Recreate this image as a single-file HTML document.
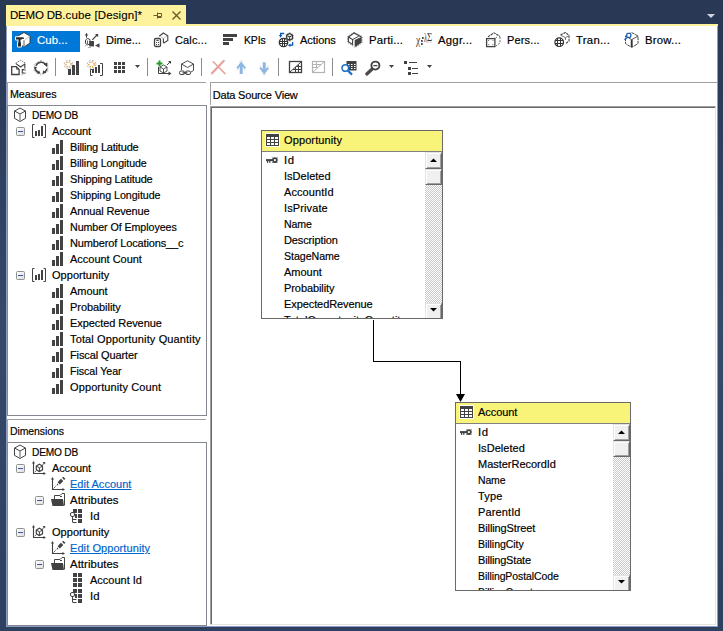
<!DOCTYPE html><html><head><meta charset="utf-8"><title>DEMO DB.cube [Design]</title><style>
html,body{margin:0;padding:0}
body{width:723px;height:631px;overflow:hidden;background:linear-gradient(#293955 0,#293955 26px,#35496a 330px,#2e4060 631px);position:relative;font-family:"Liberation Sans",sans-serif;font-size:11px;color:#000}
.a{position:absolute}
.t{position:absolute;white-space:nowrap;line-height:16px;height:16px;-webkit-text-stroke:0.18px currentColor}
svg{position:absolute;left:0;top:0;overflow:visible}
a{color:#0066cc;text-decoration:underline}
.sb{position:absolute;width:17px;box-sizing:border-box;background-color:#fff;background-image:conic-gradient(#fff 25%,#c8c8c8 0 50%,#fff 0 75%,#c8c8c8 0);background-size:2px 2px}
.btn{position:absolute;left:0;width:17px;height:17px;box-sizing:border-box;background:#f0f0f0;border:1px solid;border-color:#e3e3e3 #696969 #696969 #e3e3e3;box-shadow:inset 1px 1px 0 #fff,inset -1px -1px 0 #a0a0a0}
</style></head><body>
<div class="a" style="left:6px;top:5px;width:180px;height:21px;background:#fff29d;"></div>
<div class="a" style="left:6px;top:24px;width:712px;height:2px;background:#fff29d;"></div>
<div class="t" style="left:10px;top:7px;font-size:11.5px;line-height:17px;height:17px;-webkit-text-stroke:0.1px currentColor;letter-spacing:0.13px"><span style="letter-spacing:-0.2px">DEMO DB</span>.cube [Design]*</div>
<div class="a" style="left:6px;top:26px;width:711px;height:600px;background:#fff;"></div>
<div class="a" style="left:6px;top:26px;width:1px;height:601px;background:#8e9bc0;"></div>
<div class="a" style="left:6px;top:626px;width:712px;height:1px;background:#8e9bc0;"></div>
<div class="a" style="left:717px;top:26px;width:1px;height:601px;background:#8e9bc0;"></div>
<div class="a" style="left:12px;top:31px;width:68px;height:21px;background:#0078d7;"></div>
<div class="t" style="left:37px;top:32px;letter-spacing:0.093px;transform:scaleX(1.0300);transform-origin:0 0;color:#fff;line-height:17px;height:17px">Cub...</div>
<div class="t" style="left:106px;top:32px;letter-spacing:-0.005px;color:#000;line-height:17px;height:17px">Dime...</div>
<div class="t" style="left:175px;top:32px;letter-spacing:0.147px;color:#000;line-height:17px;height:17px">Calc...</div>
<div class="t" style="left:244px;top:32px;letter-spacing:-0.115px;transform:scaleX(0.9441);transform-origin:0 0;color:#000;line-height:17px;height:17px">KPIs</div>
<div class="t" style="left:300px;top:32px;letter-spacing:-0.039px;color:#000;line-height:17px;height:17px">Actions</div>
<div class="t" style="left:369px;top:32px;letter-spacing:0.177px;transform:scaleX(1.0300);transform-origin:0 0;color:#000;line-height:17px;height:17px">Parti...</div>
<div class="t" style="left:438px;top:32px;letter-spacing:0.243px;transform:scaleX(1.0300);transform-origin:0 0;color:#000;line-height:17px;height:17px">Aggr...</div>
<div class="t" style="left:507px;top:32px;letter-spacing:0.145px;color:#000;line-height:17px;height:17px">Pers...</div>
<div class="t" style="left:576px;top:32px;letter-spacing:0.261px;transform:scaleX(1.0300);transform-origin:0 0;color:#000;line-height:17px;height:17px">Tran...</div>
<div class="t" style="left:645px;top:32px;letter-spacing:0.217px;transform:scaleX(1.0300);transform-origin:0 0;color:#000;line-height:17px;height:17px">Brow...</div>
<div class="a" style="left:55px;top:58px;width:1px;height:18px;background:#8d8d8d;"></div>
<div class="a" style="left:147px;top:58px;width:1px;height:18px;background:#8d8d8d;"></div>
<div class="a" style="left:201px;top:58px;width:1px;height:18px;background:#8d8d8d;"></div>
<div class="a" style="left:278px;top:58px;width:1px;height:18px;background:#8d8d8d;"></div>
<div class="a" style="left:332px;top:58px;width:1px;height:18px;background:#8d8d8d;"></div>
<div class="a" style="left:7px;top:82px;width:199px;height:1px;background:#a0a0a0;"></div>
<div class="a" style="left:7px;top:82px;width:1px;height:23px;background:#a0a0a0;"></div>
<div class="a" style="left:210px;top:82px;width:507px;height:1px;background:#a0a0a0;"></div>
<div class="a" style="left:210px;top:82px;width:1px;height:23px;background:#a0a0a0;"></div>
<div class="a" style="left:7px;top:419px;width:199px;height:1px;background:#a0a0a0;"></div>
<div class="a" style="left:7px;top:419px;width:1px;height:23px;background:#a0a0a0;"></div>
<div class="t" style="left:10px;top:86px;letter-spacing:-0.058px;transform:scaleX(0.9721);transform-origin:0 0;">Measures</div>
<div class="t" style="left:10px;top:423px;letter-spacing:-0.096px;transform:scaleX(0.9522);transform-origin:0 0;">Dimensions</div>
<div class="t" style="left:212.7px;top:87px;letter-spacing:-0.184px;">Data Source View</div>
<div class="a" style="left:7px;top:105px;width:200px;height:311px;background:#fff;border:1px solid #828790;box-sizing:border-box"></div>
<div class="a" style="left:7px;top:442px;width:200px;height:184px;background:#fff;border:1px solid #828790;box-sizing:border-box"></div>
<div class="a" style="left:210px;top:106px;width:506px;height:519px;background:#fff;border:1px solid;border-color:#a0a0a0 #e3e3e3 #e3e3e3 #a0a0a0;box-sizing:border-box;box-shadow:inset 1px 1px 0 #696969"></div>
<div class="t" style="left:31.8px;top:107px;letter-spacing:-0.207px;transform:scaleX(0.9220);transform-origin:0 0;">DEMO DB</div>
<div class="t" style="left:52px;top:123px;letter-spacing:-0.106px;">Account</div>
<div class="t" style="left:70px;top:139px;letter-spacing:-0.190px;">Billing Latitude</div>
<div class="t" style="left:70px;top:155px;letter-spacing:-0.063px;transform:scaleX(0.9617);transform-origin:0 0;">Billing Longitude</div>
<div class="t" style="left:70px;top:171px;letter-spacing:-0.142px;">Shipping Latitude</div>
<div class="t" style="left:70px;top:187px;letter-spacing:-0.053px;transform:scaleX(0.9706);transform-origin:0 0;">Shipping Longitude</div>
<div class="t" style="left:70px;top:203px;letter-spacing:-0.131px;">Annual Revenue</div>
<div class="t" style="left:70px;top:219px;letter-spacing:-0.062px;transform:scaleX(0.9693);transform-origin:0 0;">Number Of Employees</div>
<div class="t" style="left:70px;top:235px;letter-spacing:-0.132px;">Numberof Locations__c</div>
<div class="t" style="left:70px;top:251px;letter-spacing:-0.019px;">Account Count</div>
<div class="t" style="left:52px;top:267px;letter-spacing:0.040px;">Opportunity</div>
<div class="t" style="left:70px;top:283px;letter-spacing:-0.051px;">Amount</div>
<div class="t" style="left:70px;top:299px;letter-spacing:-0.060px;">Probability</div>
<div class="t" style="left:70px;top:315px;letter-spacing:-0.072px;">Expected Revenue</div>
<div class="t" style="left:70px;top:331px;letter-spacing:0.136px;">Total Opportunity Quantity</div>
<div class="t" style="left:70px;top:347px;letter-spacing:-0.112px;">Fiscal Quarter</div>
<div class="t" style="left:70px;top:363px;letter-spacing:-0.052px;transform:scaleX(0.9692);transform-origin:0 0;">Fiscal Year</div>
<div class="t" style="left:70px;top:379px;letter-spacing:0.114px;">Opportunity Count</div>
<div class="t" style="left:31.8px;top:444px;letter-spacing:-0.207px;transform:scaleX(0.9220);transform-origin:0 0;">DEMO DB</div>
<div class="t" style="left:52px;top:460px;letter-spacing:-0.106px;">Account</div>
<div class="t" style="left:70px;top:476px;letter-spacing:0.021px;"><a>Edit Account</a></div>
<div class="t" style="left:70px;top:492px;letter-spacing:0.072px;transform:scaleX(1.0300);transform-origin:0 0;">Attributes</div>
<div class="t" style="left:90px;top:508px;letter-spacing:0.171px;transform:scaleX(1.0300);transform-origin:0 0;">Id</div>
<div class="t" style="left:52px;top:524px;letter-spacing:0.040px;">Opportunity</div>
<div class="t" style="left:70px;top:540px;letter-spacing:0.077px;"><a>Edit Opportunity</a></div>
<div class="t" style="left:70px;top:556px;letter-spacing:0.072px;transform:scaleX(1.0300);transform-origin:0 0;">Attributes</div>
<div class="t" style="left:90px;top:572px;letter-spacing:-0.007px;">Account Id</div>
<div class="t" style="left:90px;top:588px;letter-spacing:0.171px;transform:scaleX(1.0300);transform-origin:0 0;">Id</div>
<div class="a" style="left:261px;top:130px;width:182px;height:189px;background:#fff;border:1px solid #696969;box-sizing:border-box;overflow:hidden">
<div class="a" style="left:0;top:0;width:180px;height:20px;background:#f8f47a;border-bottom:1px solid #808080"></div>
<div class="t" style="left:22px;top:1px;letter-spacing:0.113px;">Opportunity</div>
<div class="t" style="left:22px;top:21px;letter-spacing:0.705px;transform:scaleX(1.0300);transform-origin:0 0;">Id</div>
<div class="t" style="left:22px;top:37px;letter-spacing:0.015px;">IsDeleted</div>
<div class="t" style="left:22px;top:53px;letter-spacing:0.087px;">AccountId</div>
<div class="t" style="left:22px;top:69px;letter-spacing:0.112px;">IsPrivate</div>
<div class="t" style="left:22px;top:85px;letter-spacing:-0.093px;transform:scaleX(0.9632);transform-origin:0 0;">Name</div>
<div class="t" style="left:22px;top:101px;letter-spacing:-0.120px;">Description</div>
<div class="t" style="left:22px;top:117px;letter-spacing:-0.068px;transform:scaleX(0.9692);transform-origin:0 0;">StageName</div>
<div class="t" style="left:22px;top:133px;letter-spacing:-0.018px;">Amount</div>
<div class="t" style="left:22px;top:149px;letter-spacing:-0.078px;">Probability</div>
<div class="t" style="left:22px;top:165px;letter-spacing:-0.086px;">ExpectedRevenue</div>
<div class="t" style="left:22px;top:181px;letter-spacing:0.039px;">TotalOpportunityQuantity</div>
<div class="sb" style="left:163px;top:21px;height:167px"><div class="btn" style="top:0"></div><div class="btn" style="top:17px;height:16px"></div><div class="btn" style="bottom:-1px"></div></div>
</div>
<div class="a" style="left:455px;top:402px;width:176px;height:189px;background:#fff;border:1px solid #696969;box-sizing:border-box;overflow:hidden">
<div class="a" style="left:0;top:0;width:174px;height:20px;background:#f8f47a;border-bottom:1px solid #808080"></div>
<div class="t" style="left:22px;top:1px;letter-spacing:-0.064px;">Account</div>
<div class="t" style="left:22px;top:21px;letter-spacing:0.607px;transform:scaleX(1.0300);transform-origin:0 0;">Id</div>
<div class="t" style="left:22px;top:37px;letter-spacing:0.048px;">IsDeleted</div>
<div class="t" style="left:22px;top:53px;letter-spacing:-0.025px;">MasterRecordId</div>
<div class="t" style="left:22px;top:69px;letter-spacing:-0.128px;transform:scaleX(0.9504);transform-origin:0 0;">Name</div>
<div class="t" style="left:22px;top:85px;letter-spacing:0.188px;">Type</div>
<div class="t" style="left:22px;top:101px;letter-spacing:0.127px;">ParentId</div>
<div class="t" style="left:22px;top:117px;letter-spacing:-0.115px;">BillingStreet</div>
<div class="t" style="left:22px;top:133px;letter-spacing:-0.061px;transform:scaleX(0.9598);transform-origin:0 0;">BillingCity</div>
<div class="t" style="left:22px;top:149px;letter-spacing:-0.178px;">BillingState</div>
<div class="t" style="left:22px;top:165px;letter-spacing:-0.085px;transform:scaleX(0.9520);transform-origin:0 0;">BillingPostalCode</div>
<div class="t" style="left:22px;top:181px;letter-spacing:-0.082px;transform:scaleX(0.9518);transform-origin:0 0;">BillingCountry</div>
<div class="sb" style="left:157px;top:21px;height:167px"><div class="btn" style="top:0"></div><div class="btn" style="top:17px;height:16px"></div><div class="btn" style="bottom:-1px"></div></div>
</div>
<svg width="723" height="631" viewBox="0 0 723 631"><defs><linearGradient id="eg" x1="0" y1="0" x2="1" y2="1"><stop offset="0" stop-color="#fff"/><stop offset="1" stop-color="#dcdcdc"/></linearGradient></defs>
<g transform="translate(153,11)"><path d="M0.5 4.5H4M4.5 1.5V7.5M4.5 2.5H8.5V5.5H4.5M4.5 6.5H8.5" fill="none" stroke="#6b5b2e" stroke-width="1"/></g>
<g transform="translate(172,11)"><path d="M0.5 0.5L8.5 8.5M8.5 0.5L0.5 8.5" fill="none" stroke="#6b5b2e" stroke-width="1.4"/></g>
<g transform="translate(707,14)"><path d="M0 0H8L4 4Z" fill="#ced4e2"/></g>
<g transform="translate(13,107.5)"><path d="M7 0.5L12.5 3.6V10.8L7 14L1.5 10.8V3.6Z" fill="#fff" stroke="#424242"/><path d="M1.5 3.5L7 6.5L12.5 3.5" fill="none" stroke="#424242"/><path d="M7 6.5V13" stroke="#8a8a8a" stroke-width="1.4"/></g>
<g transform="translate(16,127)"><rect x="0.5" y="0.5" width="8" height="8" rx="1" fill="url(#eg)" stroke="#919191"/><rect x="2" y="4" width="5" height="1" fill="#3c4fa0"/></g>
<g transform="translate(32,124)"><path d="M2.5 0.5H0.5V13.5H2.5M11.5 0.5H13.5V13.5H11.5" fill="none" stroke="#424242"/><rect x="3" y="7" width="2" height="5" fill="#424242"/><rect x="6" y="6" width="2" height="6" fill="#424242"/><rect x="9" y="2" width="2" height="10" fill="#424242"/></g>
<g transform="translate(16,271)"><rect x="0.5" y="0.5" width="8" height="8" rx="1" fill="url(#eg)" stroke="#919191"/><rect x="2" y="4" width="5" height="1" fill="#3c4fa0"/></g>
<g transform="translate(32,268)"><path d="M2.5 0.5H0.5V13.5H2.5M11.5 0.5H13.5V13.5H11.5" fill="none" stroke="#424242"/><rect x="3" y="7" width="2" height="5" fill="#424242"/><rect x="6" y="6" width="2" height="6" fill="#424242"/><rect x="9" y="2" width="2" height="10" fill="#424242"/></g>
<g transform="translate(52,140)"><rect x="0" y="8" width="3" height="6" fill="#424242"/><rect x="4" y="4" width="3" height="10" fill="#424242"/><rect x="8" y="0" width="3" height="14" fill="#424242"/></g>
<g transform="translate(52,156)"><rect x="0" y="8" width="3" height="6" fill="#424242"/><rect x="4" y="4" width="3" height="10" fill="#424242"/><rect x="8" y="0" width="3" height="14" fill="#424242"/></g>
<g transform="translate(52,172)"><rect x="0" y="8" width="3" height="6" fill="#424242"/><rect x="4" y="4" width="3" height="10" fill="#424242"/><rect x="8" y="0" width="3" height="14" fill="#424242"/></g>
<g transform="translate(52,188)"><rect x="0" y="8" width="3" height="6" fill="#424242"/><rect x="4" y="4" width="3" height="10" fill="#424242"/><rect x="8" y="0" width="3" height="14" fill="#424242"/></g>
<g transform="translate(52,204)"><rect x="0" y="8" width="3" height="6" fill="#424242"/><rect x="4" y="4" width="3" height="10" fill="#424242"/><rect x="8" y="0" width="3" height="14" fill="#424242"/></g>
<g transform="translate(52,220)"><rect x="0" y="8" width="3" height="6" fill="#424242"/><rect x="4" y="4" width="3" height="10" fill="#424242"/><rect x="8" y="0" width="3" height="14" fill="#424242"/></g>
<g transform="translate(52,236)"><rect x="0" y="8" width="3" height="6" fill="#424242"/><rect x="4" y="4" width="3" height="10" fill="#424242"/><rect x="8" y="0" width="3" height="14" fill="#424242"/></g>
<g transform="translate(52,252)"><rect x="0" y="8" width="3" height="6" fill="#424242"/><rect x="4" y="4" width="3" height="10" fill="#424242"/><rect x="8" y="0" width="3" height="14" fill="#424242"/></g>
<g transform="translate(52,284)"><rect x="0" y="8" width="3" height="6" fill="#424242"/><rect x="4" y="4" width="3" height="10" fill="#424242"/><rect x="8" y="0" width="3" height="14" fill="#424242"/></g>
<g transform="translate(52,300)"><rect x="0" y="8" width="3" height="6" fill="#424242"/><rect x="4" y="4" width="3" height="10" fill="#424242"/><rect x="8" y="0" width="3" height="14" fill="#424242"/></g>
<g transform="translate(52,316)"><rect x="0" y="8" width="3" height="6" fill="#424242"/><rect x="4" y="4" width="3" height="10" fill="#424242"/><rect x="8" y="0" width="3" height="14" fill="#424242"/></g>
<g transform="translate(52,332)"><rect x="0" y="8" width="3" height="6" fill="#424242"/><rect x="4" y="4" width="3" height="10" fill="#424242"/><rect x="8" y="0" width="3" height="14" fill="#424242"/></g>
<g transform="translate(52,348)"><rect x="0" y="8" width="3" height="6" fill="#424242"/><rect x="4" y="4" width="3" height="10" fill="#424242"/><rect x="8" y="0" width="3" height="14" fill="#424242"/></g>
<g transform="translate(52,364)"><rect x="0" y="8" width="3" height="6" fill="#424242"/><rect x="4" y="4" width="3" height="10" fill="#424242"/><rect x="8" y="0" width="3" height="14" fill="#424242"/></g>
<g transform="translate(52,380)"><rect x="0" y="8" width="3" height="6" fill="#424242"/><rect x="4" y="4" width="3" height="10" fill="#424242"/><rect x="8" y="0" width="3" height="14" fill="#424242"/></g>
<g transform="translate(13,444.5)"><path d="M7 0.5L12.5 3.6V10.8L7 14L1.5 10.8V3.6Z" fill="#fff" stroke="#424242"/><path d="M1.5 3.5L7 6.5L12.5 3.5" fill="none" stroke="#424242"/><path d="M7 6.5V13" stroke="#8a8a8a" stroke-width="1.4"/></g>
<g transform="translate(16,464)"><rect x="0.5" y="0.5" width="8" height="8" rx="1" fill="url(#eg)" stroke="#919191"/><rect x="2" y="4" width="5" height="1" fill="#3c4fa0"/></g>
<g transform="translate(32,461)"><path d="M1.5 1V12.5H13" fill="none" stroke="#424242" stroke-width="1.1"/><path d="M0 2.6L1.5 0L3 2.6ZM11.4 11L14 12.5L11.4 14Z" fill="#424242"/><path d="M7.4 3.2L10.5 5V8.8L7.4 10.6L4.3 8.8V5Z" fill="#fff" stroke="#424242" stroke-width="1.2"/><path d="M4.5 5.1L7.4 6.8L10.3 5.1M7.4 6.8V10.4" fill="none" stroke="#424242" stroke-width="1"/><path d="M10.2 4.2L12 2.4" stroke="#424242"/><path d="M10.5 1H13.2V3.6Z" fill="#424242"/><path d="M2.8 11.2L3.8 10.2" stroke="#424242" stroke-width="0.9"/></g>
<g transform="translate(51,477)"><path d="M1.5 1V12.5H13" fill="none" stroke="#424242" stroke-width="1.1"/><path d="M0 2.6L1.5 0L3 2.6ZM11.4 11L14 12.5L11.4 14Z" fill="#424242"/><path d="M7.7 6.3L11.1 2.9" stroke="#424242" stroke-width="3.3"/><path d="M12.1 1.9L13.3 0.7" stroke="#424242" stroke-width="3"/><path d="M5.6 8.6L7.6 8L6.2 6.6Z" fill="#424242"/><path d="M2.6 11.4L5 9" stroke="#424242" stroke-dasharray="1.6 1"/></g>
<g transform="translate(35,496)"><rect x="0.5" y="0.5" width="8" height="8" rx="1" fill="url(#eg)" stroke="#919191"/><rect x="2" y="4" width="5" height="1" fill="#3c4fa0"/></g>
<g transform="translate(51,493)"><path d="M3.5 12.5V2.5L9 2.5L11 0.5H13.5V12.5" fill="#fff" stroke="#424242"/><path d="M0 6H12L13 13H1.5Z" fill="#424242"/><rect x="9" y="3" width="2" height="1" fill="#424242"/></g>
<g transform="translate(70,509)"><rect x="3" y="0" width="4" height="4" fill="#424242"/><rect x="8" y="0" width="4" height="4" fill="#424242"/><rect x="8" y="5" width="4" height="4" fill="#424242"/><rect x="8" y="10" width="4" height="4" fill="#424242"/><rect x="5" y="5" width="2" height="4" fill="#424242"/><rect x="0.5" y="3.5" width="4" height="4" rx="1.5" fill="#fff" stroke="#424242"/><path d="M2.5 8V13M2.5 10.5H6.5M2.5 13.5H6.5" fill="none" stroke="#424242"/></g>
<g transform="translate(16,528)"><rect x="0.5" y="0.5" width="8" height="8" rx="1" fill="url(#eg)" stroke="#919191"/><rect x="2" y="4" width="5" height="1" fill="#3c4fa0"/></g>
<g transform="translate(32,525)"><path d="M1.5 1V12.5H13" fill="none" stroke="#424242" stroke-width="1.1"/><path d="M0 2.6L1.5 0L3 2.6ZM11.4 11L14 12.5L11.4 14Z" fill="#424242"/><path d="M7.4 3.2L10.5 5V8.8L7.4 10.6L4.3 8.8V5Z" fill="#fff" stroke="#424242" stroke-width="1.2"/><path d="M4.5 5.1L7.4 6.8L10.3 5.1M7.4 6.8V10.4" fill="none" stroke="#424242" stroke-width="1"/><path d="M10.2 4.2L12 2.4" stroke="#424242"/><path d="M10.5 1H13.2V3.6Z" fill="#424242"/><path d="M2.8 11.2L3.8 10.2" stroke="#424242" stroke-width="0.9"/></g>
<g transform="translate(51,541)"><path d="M1.5 1V12.5H13" fill="none" stroke="#424242" stroke-width="1.1"/><path d="M0 2.6L1.5 0L3 2.6ZM11.4 11L14 12.5L11.4 14Z" fill="#424242"/><path d="M7.7 6.3L11.1 2.9" stroke="#424242" stroke-width="3.3"/><path d="M12.1 1.9L13.3 0.7" stroke="#424242" stroke-width="3"/><path d="M5.6 8.6L7.6 8L6.2 6.6Z" fill="#424242"/><path d="M2.6 11.4L5 9" stroke="#424242" stroke-dasharray="1.6 1"/></g>
<g transform="translate(35,560)"><rect x="0.5" y="0.5" width="8" height="8" rx="1" fill="url(#eg)" stroke="#919191"/><rect x="2" y="4" width="5" height="1" fill="#3c4fa0"/></g>
<g transform="translate(51,557)"><path d="M3.5 12.5V2.5L9 2.5L11 0.5H13.5V12.5" fill="#fff" stroke="#424242"/><path d="M0 6H12L13 13H1.5Z" fill="#424242"/><rect x="9" y="3" width="2" height="1" fill="#424242"/></g>
<g transform="translate(73,573)"><rect x="0" y="0" width="4" height="4" fill="#424242"/><rect x="0" y="5" width="4" height="4" fill="#424242"/><rect x="0" y="10" width="4" height="4" fill="#424242"/><rect x="5" y="0" width="4" height="4" fill="#424242"/><rect x="5" y="5" width="4" height="4" fill="#424242"/><rect x="5" y="10" width="4" height="4" fill="#424242"/></g>
<g transform="translate(70,589)"><rect x="3" y="0" width="4" height="4" fill="#424242"/><rect x="8" y="0" width="4" height="4" fill="#424242"/><rect x="8" y="5" width="4" height="4" fill="#424242"/><rect x="8" y="10" width="4" height="4" fill="#424242"/><rect x="5" y="5" width="2" height="4" fill="#424242"/><rect x="0.5" y="3.5" width="4" height="4" rx="1.5" fill="#fff" stroke="#424242"/><path d="M2.5 8V13M2.5 10.5H6.5M2.5 13.5H6.5" fill="none" stroke="#424242"/></g>
<g transform="translate(265,133)"><g shape-rendering="crispEdges"><rect x="0" y="0" width="15" height="14" fill="#fff"/><rect x="1" y="1" width="13" height="12" fill="#424242"/><rect x="2" y="4" width="3" height="2" fill="#fff"/><rect x="2" y="7" width="3" height="2" fill="#fff"/><rect x="2" y="10" width="3" height="2" fill="#fff"/><rect x="6" y="4" width="3" height="2" fill="#fff"/><rect x="6" y="7" width="3" height="2" fill="#fff"/><rect x="6" y="10" width="3" height="2" fill="#fff"/><rect x="10" y="4" width="3" height="2" fill="#fff"/><rect x="10" y="7" width="3" height="2" fill="#fff"/><rect x="10" y="10" width="3" height="2" fill="#fff"/></g></g>
<g transform="translate(266,157.3)"><path d="M6.2 0.1L11.6 5.5M11.6 0.1L6.2 5.5" stroke="#777" stroke-width="1"/><circle cx="8.9" cy="2.8" r="2" fill="#fff" stroke="#424242" stroke-width="1.8"/><rect x="0" y="1.8" width="6.4" height="2" fill="#424242"/><rect x="1" y="3.6" width="1.2" height="2" fill="#424242"/><rect x="3.2" y="3.6" width="1.2" height="2" fill="#424242"/></g>
<g transform="translate(430,158)"><path d="M0 4H7L3.5 0.5Z" fill="#000"/></g>
<g transform="translate(430,308)"><path d="M0 0H7L3.5 3.5Z" fill="#000"/></g>
<g transform="translate(459,405)"><g shape-rendering="crispEdges"><rect x="0" y="0" width="15" height="14" fill="#fff"/><rect x="1" y="1" width="13" height="12" fill="#424242"/><rect x="2" y="4" width="3" height="2" fill="#fff"/><rect x="2" y="7" width="3" height="2" fill="#fff"/><rect x="2" y="10" width="3" height="2" fill="#fff"/><rect x="6" y="4" width="3" height="2" fill="#fff"/><rect x="6" y="7" width="3" height="2" fill="#fff"/><rect x="6" y="10" width="3" height="2" fill="#fff"/><rect x="10" y="4" width="3" height="2" fill="#fff"/><rect x="10" y="7" width="3" height="2" fill="#fff"/><rect x="10" y="10" width="3" height="2" fill="#fff"/></g></g>
<g transform="translate(460,429.3)"><path d="M6.2 0.1L11.6 5.5M11.6 0.1L6.2 5.5" stroke="#777" stroke-width="1"/><circle cx="8.9" cy="2.8" r="2" fill="#fff" stroke="#424242" stroke-width="1.8"/><rect x="0" y="1.8" width="6.4" height="2" fill="#424242"/><rect x="1" y="3.6" width="1.2" height="2" fill="#424242"/><rect x="3.2" y="3.6" width="1.2" height="2" fill="#424242"/></g>
<g transform="translate(618,430)"><path d="M0 4H7L3.5 0.5Z" fill="#000"/></g>
<g transform="translate(618,580)"><path d="M0 0H7L3.5 3.5Z" fill="#000"/></g>
<path d="M373.5 320V361.5H460.5V395" fill="none" stroke="#000" shape-rendering="crispEdges"/><path d="M456 394H465L460.5 402Z" fill="#000"/>
<g transform="translate(15,32)"><path d="M9 0.5L15 4V11L9 15L3 11V4Z" fill="#fff" stroke="#333" stroke-width="0.9"/><path d="M3.3 4.2L9 8.5L14.7 4.2" fill="none" stroke="#c4c4c4"/><path d="M9 8.5V14.5" stroke="#999" stroke-width="1.6"/><g stroke="#fff" stroke-width="2" stroke-linejoin="round" fill="#fff"><path d="M1 5.2H8.3Q9 5.6 9 7H7.5L7 6.5V7.5H5.5V10.5H6V14.4H3V10.5H3.5V7.5H1Z"/></g><path d="M1 5.2H8.3Q9 5.6 9 7H7.5L7 6.5V7.5H5.5V10.5H6V14.4H3V10.5H3.5V7.5H1Z" fill="#2b2b2b"/></g>
<g transform="translate(84,32)"><path d="M2.5 3V5.8" stroke="#424242"/><path d="M0.8 3.6L2.5 0.8L4.2 3.6Z" fill="#424242"/><path d="M8.3 7.8L13 3" stroke="#424242" stroke-width="1.2"/><path d="M11 2H14.2V5.2Z" fill="#424242"/><path d="M11 13.5L15.5 11.3V15.7Z" fill="#424242"/><path d="M3.5 6.5L6 7.5V12L3.5 12.8L1.5 11.5V8Z" fill="#fff" stroke="#424242"/><path d="M3.5 8.5V12" stroke="#424242" stroke-width="0.8"/><path d="M5.2 9H10V14.4H5.2Z" fill="#424242"/><path d="M1 14L3 12.5M7 15.5H4" stroke="#9a9a9a" stroke-width="0.8"/></g>
<g transform="translate(153,32)"><path d="M6.2 4.3L10.4 1L14.8 3.8V8.5L10.4 11.3" fill="none" stroke="#424242" stroke-width="1.1"/><path d="M7.5 4.6L10.4 6.4L14 4.2" fill="none" stroke="#c8c8c8"/><path d="M10.4 6.4V11" stroke="#424242" stroke-width="1.1"/><rect x="1.5" y="6.5" width="6" height="8" rx="1.3" fill="#fff" stroke="#424242" stroke-width="1.3"/><path d="M3.3 8.4H5.7" stroke="#424242" stroke-width="1.1"/><rect x="3" y="10" width="1" height="1" fill="#424242"/><rect x="5" y="10" width="1" height="1" fill="#424242"/><rect x="3" y="12" width="1" height="1" fill="#424242"/><rect x="5" y="12" width="1" height="1" fill="#424242"/></g>
<g transform="translate(222,32)"><rect x="1" y="2" width="14" height="3" fill="#424242"/><rect x="1" y="6" width="10" height="3" fill="#424242"/><rect x="1" y="10" width="6" height="3" fill="#424242"/></g>
<g transform="translate(278,32)"><circle cx="5.5" cy="10.5" r="4.2" fill="#fff" stroke="#333" stroke-width="1.3"/><path d="M1.5 9.5H9.5M1.5 11.5H9.5M4.5 6.5V14.5M6.5 6.5V14.5" stroke="#333" stroke-width="1" fill="none"/><path d="M11.6 0.3L15.3 2.5V7.3L11.6 9.4L7.9 7.3V2.5Z" fill="none" stroke="#a8a8a8" stroke-dasharray="1.2 1.2"/><path d="M11.6 1.5L14.5 3.2V6.6L11.6 8.3L8.7 6.6V3.2Z" fill="#fff" stroke="#333" stroke-width="1.2"/><path d="M9.4 3.6L11.6 5L13.8 3.6M11.6 5V8" fill="none" stroke="#333" stroke-width="1.1"/><path d="M6.2 1.5H2.6V3.4" fill="none" stroke="#0a58b0" stroke-width="1.3"/><path d="M0.9 3H4.3L2.6 5.8Z" fill="#0a58b0"/><path d="M14.6 10V13.2H12" fill="none" stroke="#0a58b0" stroke-width="1.3"/><path d="M12.5 11.5V14.9L9.9 13.2Z" fill="#0a58b0"/></g>
<g transform="translate(347,32)"><path d="M7.3 0.2L15.3 4.4V10.8L8.3 15.6L0.6 10.6V4.4Z" fill="none" stroke="#9a9a9a" stroke-dasharray="1.2 1.2"/><path d="M1.4 5L7 1L14.5 4.9" fill="none" stroke="#424242" stroke-width="1.1"/><path d="M1.4 5V9.7L5.6 12.4V7.6Z" fill="#fff" stroke="#424242" stroke-width="1.1"/><path d="M5.6 7.6L11.8 4.2" stroke="#424242" stroke-width="1"/><path d="M7.7 8L14.7 4.7V10.6L8.7 14.8L7.7 14.2Z" fill="#424242"/></g>
<g font-family="Liberation Serif,serif" fill="#3a3a3a"><text x="416" y="44.2" font-size="12" textLength="4.2" lengthAdjust="spacingAndGlyphs">χ</text><text x="424" y="41.5" font-size="12" textLength="3.2" lengthAdjust="spacingAndGlyphs">λ</text><text x="427" y="40.9" font-size="11.5" textLength="5.2" lengthAdjust="spacingAndGlyphs">Σ</text></g><rect x="422" y="37.2" width="1.7" height="1.6" fill="#222"/><rect x="421" y="40.2" width="1.7" height="1.6" fill="#222"/><rect x="421" y="43.2" width="1.7" height="1.6" fill="#222"/><rect x="425" y="41.8" width="7" height="0.6" fill="#bbb"/>
<g transform="translate(485,32)"><path d="M3 4.8L9 0.8L15 4.5" fill="none" stroke="#444" stroke-width="1.1" stroke-dasharray="2.6 0.7"/><path d="M15 5V11L11 14" fill="none" stroke="#666" stroke-dasharray="2 1.2"/><path d="M10.5 6L12 5" stroke="#777"/><rect x="1.6" y="6.6" width="8.3" height="8" fill="#fff" stroke="#424242" stroke-width="1.3"/><path d="M3.2 8.2L4 9M8.3 8.2L7.5 9M3.2 13L4 12.2M8.3 13L7.5 12.2" stroke="#424242" stroke-width="0.9"/></g>
<g transform="translate(554,32)"><path d="M6.4 3L11.4 0.5L15 3.5V9L12 11.4" fill="none" stroke="#444" stroke-width="1.1" stroke-dasharray="2.6 0.8"/><path d="M7 3.4L11.4 5.6L14.8 3.8M11.4 5.6V8" fill="none" stroke="#777"/><circle cx="5.2" cy="10.2" r="4.3" fill="#fff" stroke="#333" stroke-width="1.2"/><path d="M1 8.5H9.4M1 11.5H9.4M3.5 6.2V14.2M6.5 6.2V14.2" stroke="#333" stroke-width="1" fill="none"/></g>
<g transform="translate(624,32)"><path d="M7.7 0.6L14 4V11.6L7.7 15.4L1.5 11.6V4Z" fill="#fff" stroke="#444" stroke-dasharray="3.2 0.8"/><path d="M1.5 4L7.7 7.7L14 4" fill="none" stroke="#555"/><path d="M7.7 7.7V15" stroke="#333" stroke-width="1.9"/><rect x="2.8" y="1.3" width="4" height="4" rx="1" fill="#fff" stroke="#1e5fb4" stroke-width="1.3"/><path d="M3 5.5L0.5 8" stroke="#1e5fb4" stroke-width="1.5"/></g>
<g transform="translate(11,60)"><path d="M4.6 3.3L9.6 0.2L14.7 3.3" fill="none" stroke="#666" stroke-dasharray="1.4 1"/><path d="M5 3.6L9.6 7L14.3 3.6" fill="none" stroke="#3c3c3c" stroke-width="1.1"/><path d="M13.8 4V8.6" stroke="#3c3c3c" stroke-width="1.1"/><path d="M0.7 6.7H5.3L8.1 9.5V14.5H0.7Z" fill="#fff" stroke="#424242" stroke-width="1.3"/><path d="M5.5 7V9.3H7.8" fill="none" stroke="#424242" stroke-width="0.7"/><path d="M13.2 9.6H11.3V13H13.6" fill="none" stroke="#3c3c3c" stroke-width="1.1"/><path d="M13 9L14.8 10.8M14.8 9L13 10.8M13 12.5L14.8 14.3M14.8 12.5L13 14.3M10.5 15.2L12 13.8" stroke="#8a8a8a" stroke-width="0.8"/></g>
<g transform="translate(33,60)"><path d="M8 0.3L14.8 4V11.3L8 15.2L1.2 11.3V4Z" fill="none" stroke="#a6a6a6" stroke-dasharray="1.4 1.4"/><path d="M3 5.8A5.4 5.4 0 0 1 12.6 4.6" fill="none" stroke="#424242" stroke-width="1.5"/><path d="M10.6 3.9L14.4 2.6L14.2 7.2Z" fill="#424242"/><path d="M14 8.6A5.6 5.6 0 0 1 11.6 12.2" fill="none" stroke="#424242" stroke-width="1.5"/><path d="M9.4 13.9L10.2 10.2L13.4 12.8Z" fill="#424242"/><path d="M2 7.6A5.6 5.6 0 0 0 5.2 12.2" fill="none" stroke="#424242" stroke-width="1.5"/><path d="M7.6 13.8L3.8 13.4L6 10.4Z" fill="#424242"/><path d="M1.2 6.4L2 9.4L4.2 7Z" fill="#424242"/></g>
<g transform="translate(64,60)"><circle cx="4.5" cy="4.5" r="2.6" fill="none" stroke="#e08a1e" stroke-width="1.3" stroke-dasharray="1.2 1.2"/><circle cx="4.5" cy="4.5" r="4.3" fill="none" stroke="#a8a8a8" stroke-width="1" stroke-dasharray="1.6 1.8"/><rect x="4" y="9" width="3" height="6" fill="#424242"/><rect x="8" y="5" width="3" height="10" fill="#424242"/><rect x="12" y="1" width="3" height="14" fill="#424242"/></g>
<g transform="translate(87,60)"><circle cx="4.5" cy="4.5" r="2.6" fill="none" stroke="#e08a1e" stroke-width="1.3" stroke-dasharray="1.2 1.2"/><circle cx="4.5" cy="4.5" r="4.3" fill="none" stroke="#a8a8a8" stroke-width="1" stroke-dasharray="1.6 1.8"/><path d="M5 9.5H3.5V15.5H5.5M13 3.5H15.5V15.5H13" fill="none" stroke="#424242"/><rect x="5" y="9" width="2" height="4" fill="#424242"/><rect x="8" y="7" width="2" height="6" fill="#424242"/><rect x="11" y="5" width="2" height="8" fill="#424242"/></g>
<g transform="translate(114,62)"><rect x="0" y="0" width="3" height="3" fill="#424242"/><rect x="0" y="4" width="3" height="3" fill="#424242"/><rect x="0" y="8" width="3" height="3" fill="#424242"/><rect x="4" y="0" width="3" height="3" fill="#424242"/><rect x="4" y="4" width="3" height="3" fill="#424242"/><rect x="4" y="8" width="3" height="3" fill="#424242"/><rect x="8" y="0" width="3" height="3" fill="#424242"/><rect x="8" y="4" width="3" height="3" fill="#424242"/><rect x="8" y="8" width="3" height="3" fill="#424242"/></g>
<g transform="translate(135,65)"><path d="M0 0H5L2.5 3Z" fill="#424242"/></g>
<g transform="translate(156,60)"><path d="M2.5 7V13.5H14" fill="none" stroke="#424242"/><path d="M12.5 11.5L15.5 13.5L12.5 15.5Z" fill="#424242"/><path d="M7.5 5L11 7V11L7.5 13L4 11V7Z" fill="#fff" stroke="#424242" stroke-width="0.9"/><path d="M4 7L7.5 9L11 7M7.5 9V13" fill="none" stroke="#424242" stroke-width="0.9"/><path d="M11 5L14 2" stroke="#424242"/><path d="M12 1H15V4Z" fill="#424242"/><path d="M3.5 0.5V6.5M0.5 3.5H6.5" stroke="#2b9a2b" stroke-width="2"/></g>
<g transform="translate(179,60)"><path d="M8.5 0.8L14.5 4V10.5L11.8 12.2" fill="none" stroke="#4c4c4c"/><path d="M8.5 0.8L2.5 4V10" fill="none" stroke="#4c4c4c"/><path d="M2.5 4L8.5 7.5L14.5 4" fill="none" stroke="#4c4c4c"/><rect x="0.5" y="11" width="5" height="3.5" rx="1.5" fill="#fff" stroke="#424242"/><rect x="6.5" y="11" width="5" height="3.5" rx="1.5" fill="#fff" stroke="#424242"/><path d="M3.5 12.8H8.5" stroke="#424242" stroke-width="1.2"/></g>
<g transform="translate(211,60)"><path d="M1 13.3L12.6 1" fill="none" stroke="#e4a59d" stroke-width="2.3" stroke-linecap="round"/><path d="M2.2 1.8L14 13.6" fill="none" stroke="#e4a59d" stroke-width="1.5" stroke-linecap="round"/><path d="M12.6 1L14.5 0M1 13.3L0.3 14.2" stroke="#c9c9c9" stroke-width="0.8"/></g>
<g transform="translate(236,61)"><path d="M5.2 13V3.5" stroke="#8db6e2" stroke-width="3"/><path d="M1.2 7.4L5.2 2.2L9.2 7.4" fill="none" stroke="#8db6e2" stroke-width="2.1" stroke-linejoin="miter"/><path d="M0.6 9.5L2.4 7.6M9.8 9.5L8 7.6M3.2 1.2L5.2 -0.4L7.2 1.2" fill="none" stroke="#c8d2dc" stroke-width="0.8"/></g>
<g transform="translate(259,62)"><path d="M5.2 0.3V10" stroke="#8db6e2" stroke-width="3"/><path d="M1.2 5.6L5.2 10.8L9.2 5.6" fill="none" stroke="#8db6e2" stroke-width="2.1" stroke-linejoin="miter"/><path d="M0.6 3.5L2.4 5.4M9.8 3.5L8 5.4M3.2 11.8L5.2 13.4L7.2 11.8" fill="none" stroke="#c8d2dc" stroke-width="0.8"/></g>
<g transform="translate(289,61)"><rect x="0.5" y="0.5" width="12" height="11" fill="#fff" stroke="#424242" stroke-width="1.3"/><path d="M1 11L12 1" stroke="#424242"/><path d="M6.5 6V11.5M9.5 3.5V11.5M4 8.5H12M7 5.5H12" stroke="#424242" fill="none"/></g>
<g transform="translate(312,61)"><rect x="0.5" y="0.5" width="12" height="11" fill="#fff" stroke="#b4b4b4" stroke-width="1.2"/><path d="M1 11L12 1" stroke="#b4b4b4"/><path d="M4.5 1V6.5M1 3.5H9M1 6.5H6" stroke="#b4b4b4" fill="none"/></g>
<g transform="translate(341,60)"><rect x="5.5" y="1" width="10" height="9.5" fill="#424242"/><path d="M7 4.5H8.5M10 4.5H11.5M13 4.5H14.5M7 6.5H8.5M10 6.5H11.5M13 6.5H14.5M10 8.5H11.5M13 8.5H14.5" stroke="#fff" stroke-width="1"/><circle cx="4.3" cy="8" r="3.3" fill="#fff" stroke="#1e6fc8" stroke-width="1.6"/><path d="M6.8 10.5L11 14.6" stroke="#1e6fc8" stroke-width="2.2"/></g>
<g transform="translate(365,60)"><path d="M7.2 9L1.8 14" stroke="#4a4a4a" stroke-width="3.2" stroke-linecap="round"/><circle cx="10.4" cy="5.6" r="4" fill="#fff" stroke="#424242" stroke-width="1.9"/><path d="M8.4 5.6H12.4" stroke="#424242" stroke-width="1.3"/></g>
<g transform="translate(389,65)"><path d="M0 0H5L2.5 3Z" fill="#424242"/></g>
<g transform="translate(404,61)"><rect x="0" y="0" width="3" height="3" fill="#424242"/><rect x="4" y="6" width="3" height="3" fill="#424242"/><rect x="4" y="11" width="3" height="3" fill="#424242"/><path d="M5 1.5H13M8 7.5H14M8 12.5H14" stroke="#424242"/></g>
<g transform="translate(427,65)"><path d="M0 0H5L2.5 3Z" fill="#424242"/></g>
</svg>
</body></html>
